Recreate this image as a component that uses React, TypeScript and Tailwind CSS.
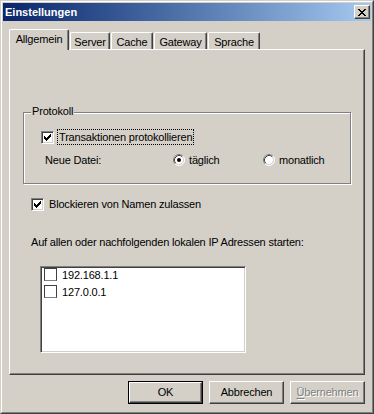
import React from "react";

// pixel check mark, 7x7 (x, y, w)
const CHECK_PX = [[6, 0, 1], [5, 1, 2], [0, 2, 1], [4, 2, 3], [0, 3, 2], [3, 3, 3], [0, 4, 5], [1, 5, 3], [2, 6, 1]];
// close glyph, 8x7
const X_PX = [[0, 0, 2], [6, 0, 2], [1, 1, 2], [5, 1, 2], [2, 2, 4], [3, 3, 2], [2, 4, 4], [1, 5, 2], [5, 5, 2], [0, 6, 2], [6, 6, 2]];

const raised = "border border-t-white border-l-white border-r-[#404040] border-b-[#404040] shadow-[inset_-1px_-1px_#808080]";

function PixelGlyph({ px, w, h }: { px: number[][]; w: number; h: number }) {
  return (
    <svg width={w} height={h} viewBox={`0 0 ${w} ${h}`} shapeRendering="crispEdges" className="block">
      {px.map(([x, y, len], i) => (
        <rect key={i} x={x} y={y} width={len} height={1} fill="#000" />
      ))}
    </svg>
  );
}

function Checkbox({ checked, flat }: { checked?: boolean; flat?: boolean }) {
  return (
    <span
      className={`relative block w-[13px] h-[13px] shrink-0 bg-white border ${
        flat
          ? "border-t-[#404040] border-l-[#404040] border-r-[#404040] border-b-[#808080]"
          : "border-t-[#808080] border-l-[#808080] border-r-white border-b-white shadow-[inset_1px_1px_#404040,inset_-1px_-1px_#d4d0c8]"
      }`}
    >
      {checked && (
        <span className="absolute left-[2px] top-[2px]">
          <PixelGlyph px={CHECK_PX} w={7} h={7} />
        </span>
      )}
    </span>
  );
}

function Radio({ checked }: { checked?: boolean }) {
  return (
    <svg width="12" height="12" viewBox="0 0 12 12" className="block shrink-0">
      <circle cx="6" cy="6" r="5" fill="#fff" />
      <path d="M2.11 9.89 A5.5 5.5 0 0 1 9.89 2.11" fill="none" stroke="#808080" strokeWidth="1" />
      <path d="M9.89 2.11 A5.5 5.5 0 0 1 2.11 9.89" fill="none" stroke="#fff" strokeWidth="1" />
      <path d="M2.82 9.18 A4.5 4.5 0 0 1 9.18 2.82" fill="none" stroke="#404040" strokeWidth="1" />
      <path d="M9.18 2.82 A4.5 4.5 0 0 1 2.82 9.18" fill="none" stroke="#d4d0c8" strokeWidth="1" />
      {checked && <circle cx="6" cy="6" r="2" fill="#000" />}
    </svg>
  );
}

function Tab({ label, active, w }: { label: string; active?: boolean; w: string }) {
  if (active) {
    return (
      <div className={`relative z-10 -mb-px h-[21px] ${w} bg-[#d4d0c8] border-t border-l border-r border-t-white border-l-white border-r-[#404040] shadow-[inset_-1px_0_#808080] rounded-t-[2px] flex justify-center pt-[3px] leading-[13px]`}>
        {label}
      </div>
    );
  }
  return (
    <div className={`ml-[1px] h-[17px] ${w} border-t border-l border-r border-t-white border-l-white border-r-[#404040] shadow-[inset_-1px_0_#808080] rounded-t-[2px] flex justify-center pt-[3px] leading-[13px]`}>
      {label}
    </div>
  );
}

export default function App() {
  return (
    <div className="w-[374px] h-[414px] bg-[#d4d0c8] border border-t-[#d4d0c8] border-l-[#d4d0c8] border-r-[#404040] border-b-[#404040] font-['Liberation_Sans',Arial,sans-serif] text-[11px] tracking-[-0.18px] text-black">
      <div className="h-full border border-t-white border-l-white border-r-[#808080] border-b-[#808080] p-[1px] flex flex-col">
        {/* Titelleiste */}
        <div className="h-[18px] shrink-0 flex items-center justify-between bg-linear-to-r from-[#0a246a] to-[#a6caf0] pl-[2px] pr-[1px]">
          <span className="font-bold text-white leading-[13px] tracking-normal">Einstellungen</span>
          <div className={`w-[16px] h-[14px] bg-[#d4d0c8] flex items-center justify-center ${raised}`}>
            <PixelGlyph px={X_PX} w={8} h={7} />
          </div>
        </div>

        <div className="px-[6px] pt-[8px]">
          {/* Tabs */}
          <div className="flex items-end">
            <Tab label="Allgemein" active w="w-[60px]" />
            <Tab label="Server" w="w-[40px]" />
            <Tab label="Cache" w="w-[42px]" />
            <Tab label="Gateway" w="w-[53px]" />
            <Tab label="Sprache" w="w-[52px]" />
          </div>

          {/* Tab-Inhalt */}
          <div className="h-[326px] border border-t-white border-l-white border-r-[#404040] border-b-[#404040] shadow-[inset_-1px_-1px_#808080] flex flex-col items-start leading-[13px]">
            {/* Gruppe Protokoll */}
            <div className="relative self-stretch mx-[13px] mt-[62px] h-[72px] border border-[#808080] shadow-[inset_1px_1px_white,1px_1px_white]">
              <span className="absolute left-[7px] -top-[8px] bg-[#d4d0c8] px-[1px]">Protokoll</span>
              <div className="flex items-center mt-[16px] ml-[17px] h-[16px]">
                <Checkbox checked />
                <span className="ml-[3px] h-[16px] flex items-center px-[1px] border border-dotted border-black">
                  Transaktionen protokollieren
                </span>
              </div>
              <div className="flex items-center mt-[7px] ml-[21px] h-[16px]">
                <span className="w-[128px]">Neue Datei:</span>
                <div className="w-[90px] flex items-center gap-[4px]">
                  <Radio checked />
                  <span>täglich</span>
                </div>
                <div className="flex items-center gap-[4px]">
                  <Radio />
                  <span>monatlich</span>
                </div>
              </div>
            </div>

            <div className="flex items-center gap-[5px] mt-[12px] ml-[21px] h-[16px]">
              <Checkbox checked />
              <span>Blockieren von Namen zulassen</span>
            </div>

            <p className="mt-[24px] ml-[21px]">Auf allen oder nachfolgenden lokalen IP Adressen starten:</p>

            <div className="mt-[17px] ml-[30px] w-[206px] h-[87px] bg-white border border-t-[#808080] border-l-[#808080] border-r-white border-b-white shadow-[inset_1px_1px_#404040,inset_-1px_-1px_#d4d0c8] pl-[3px] pt-[1px]">
              {["192.168.1.1", "127.0.0.1"].map((ip) => (
                <div key={ip} className="h-[17px] flex items-start gap-[5px]">
                  <Checkbox flat />
                  <span className="pt-[1px]">{ip}</span>
                </div>
              ))}
            </div>
          </div>

          {/* Schaltflächen */}
          <div className="mt-[6px] flex justify-end gap-[6px]">
            <div className="w-[75px] h-[23px] border border-black">
              <div className={`h-full flex items-center justify-center ${raised}`}>OK</div>
            </div>
            <div className={`w-[75px] h-[23px] flex items-center justify-center ${raised}`}>Abbrechen</div>
            <div className={`w-[75px] h-[23px] flex items-center justify-center text-[#808080] [text-shadow:1px_1px_#fff] ${raised}`}>
              <span className="underline underline-offset-2">Ü</span>bernehmen
            </div>
          </div>
        </div>
      </div>
    </div>
  );
}
